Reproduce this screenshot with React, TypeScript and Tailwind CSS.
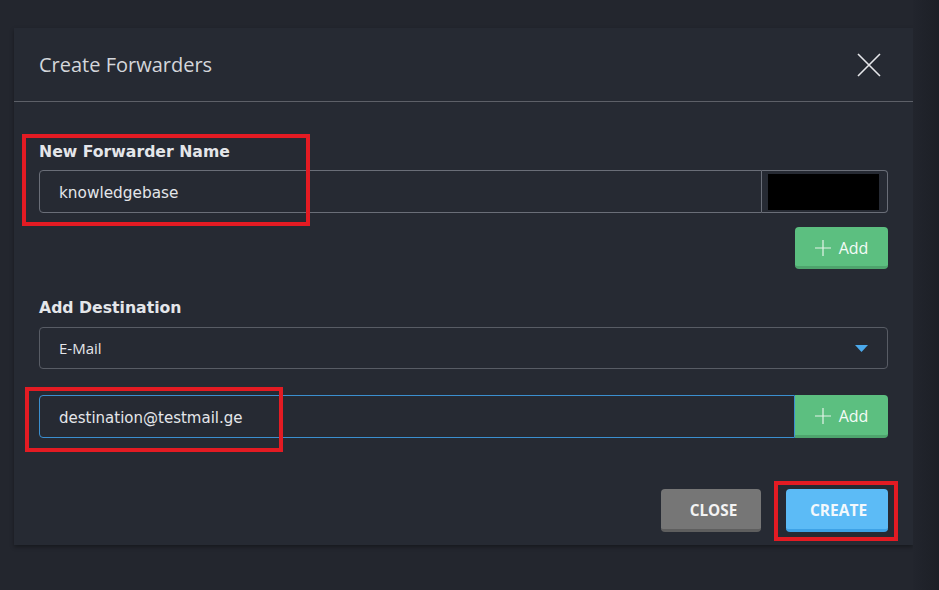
const mont = { fontFamily: '"DejaVu Sans", "Noto Sans", sans-serif' }

function AddButton({ joined }: { joined?: boolean }) {
  return (
    <button
      className={`flex h-full w-[93px] items-center justify-center gap-[8px] bg-[#5cbf80] border-b-[3px] border-[#4ea46d] pt-[2px] text-[16px] text-[#f4fbf6] font-['Open_Sans',sans-serif] ${joined ? 'rounded-r-[4px]' : 'rounded-[4px]'}`}
    >
      <svg width="16" height="16" viewBox="0 0 16 16" className="text-[#e3f4e8]">
        <path d="M8 0V16M0 8H16" stroke="currentColor" strokeWidth="1.2" />
      </svg>
      <span>Add</span>
    </button>
  )
}

export default function App() {
  return (
    <div className="relative flex h-[590px] w-[939px] overflow-hidden bg-[#23262e] font-['Open_Sans',sans-serif]">
      <div className="flex-1 pl-[14px] pt-[28px]">
        <div className="flex h-[517px] w-[899px] flex-col bg-[#262a33] shadow-[0_2px_4px_rgba(0,0,0,0.35)]">
          {/* header */}
          <div className="flex h-[74px] items-center justify-between border-b border-[#5d6068] pl-[25px] pr-[32px]">
            <h2 className="text-[20px] text-[#d4d6db]">Create Forwarders</h2>
            <svg width="24" height="24" viewBox="0 0 24 24" className="text-[#e6e7ea]">
              <path d="M1 1L23 23M23 1L1 23" stroke="currentColor" strokeWidth="1.6" />
            </svg>
          </div>

          {/* body */}
          <div className="flex flex-col px-[25px] pt-[40px]">
            <label style={mont} className="h-[20px] text-[15.7px] font-bold leading-[20px] text-[#e4e6ea]">
              New Forwarder Name
            </label>
            <div className="mt-[8px] flex h-[43px] w-[849px]">
              <div className="flex flex-1 items-center rounded-l-[4px] border border-[#6a6e78] pl-[19px] pt-[3px]">
                <span style={mont} className="text-[15.3px] text-[#e4e6ea]">knowledgebase</span>
              </div>
              <div className="flex w-[126px] items-center rounded-r-[4px] border border-l-0 border-[#6a6e78] pl-[6px]">
                <div className="h-[36px] w-[111px] bg-black" />
              </div>
            </div>
            <div className="mt-[14px] flex h-[42px] justify-end">
              <AddButton />
            </div>

            <label style={mont} className="mt-[29px] h-[20px] text-[15.7px] font-bold leading-[20px] text-[#e4e6ea]">
              Add Destination
            </label>
            <div className="mt-[9px] flex h-[42px] w-[849px] items-center justify-between rounded-[4px] border border-[#585c65] pl-[19px] pr-[19px]">
              <span className="text-[15px] text-[#e4e6ea]">E-Mail</span>
              <svg width="13" height="7" viewBox="0 0 13 7">
                <path d="M0 0H13L6.5 7Z" fill="#4ba9ec" />
              </svg>
            </div>

            <div className="mt-[26px] flex h-[43px] w-[849px]">
              <div className="flex flex-1 items-center rounded-l-[4px] border border-[#3b8fd0] pl-[19px] pt-[3px]">
                <span style={mont} className="text-[15px] text-[#e4e6ea]">destination@testmail.ge</span>
              </div>
              <AddButton joined />
            </div>

            <div className="mt-[51px] flex h-[43px] justify-end gap-[25px]">
              <button className="w-[100px] rounded-[4px] border-b-[3px] border-[#5e5e5e] bg-[#767676] pt-[3px] pl-[5px] text-[15.3px] font-bold text-[#f3f3f3]">
                CLOSE
              </button>
              <button className="w-[102px] rounded-[4px] border-b-[3px] border-[#3ea2e6] bg-[#5cbbf6] pt-[3px] pl-[3px] text-[15.5px] font-bold text-[#f3f8fc]">
                CREATE
              </button>
            </div>
          </div>
        </div>
      </div>
      <div className="w-[26px] bg-gradient-to-r from-[#22252d] to-[#1c1f26]" />

      {/* annotation boxes */}
      <div className="pointer-events-none absolute left-[22px] top-[134px] h-[92px] w-[288px] border-4 border-[#e31b23]" />
      <div className="pointer-events-none absolute left-[25px] top-[387px] h-[65px] w-[258px] border-4 border-[#e31b23]" />
      <div className="pointer-events-none absolute left-[774px] top-[481px] h-[60px] w-[124px] border-4 border-[#e31b23]" />
    </div>
  )
}
